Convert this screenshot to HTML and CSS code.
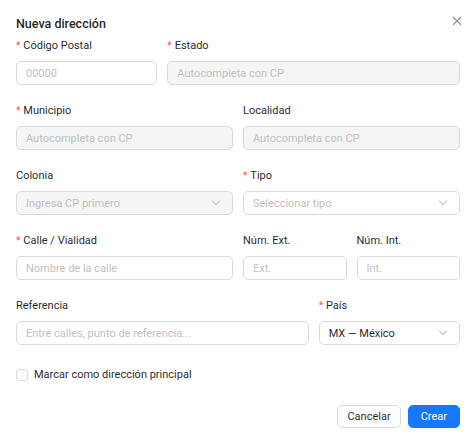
FILE: index.html
```html
<!DOCTYPE html>
<html lang="es">
<head>
  <meta charset="UTF-8" />
  <meta name="viewport" content="width=device-width, initial-scale=1.0"/>
  <title>Nueva dirección</title>
  <link rel="stylesheet" href="styles.css">
</head>
<body>

  <!-- Address modal -->
  <div class="modal">
    <div class="modal-header">
      <h2 class="modal-title">Nueva dirección</h2>
      <button class="modal-close" type="button" aria-label="Cerrar">
        <svg width="10" height="10" viewBox="0 0 10 10">
          <path d="M1 1 L9 9 M9 1 L1 9" stroke="currentColor" stroke-width="1.1" fill="none"/>
        </svg>
      </button>
    </div>

    <form class="form-grid">
      <div class="field span-8">
        <label class="required">Código Postal</label>
        <input class="input" type="text" placeholder="00000" />
      </div>
      <div class="field span-16">
        <label class="required">Estado</label>
        <input class="input" type="text" placeholder="Autocompleta con CP" disabled />
      </div>

      <div class="field span-12">
        <label class="required">Municipio</label>
        <input class="input" type="text" placeholder="Autocompleta con CP" disabled />
      </div>
      <div class="field span-12">
        <label>Localidad</label>
        <input class="input" type="text" placeholder="Autocompleta con CP" disabled />
      </div>

      <div class="field span-12">
        <label>Colonia</label>
        <div class="select is-disabled">
          <span class="select-placeholder">Ingresa CP primero</span>
          <span class="select-arrow"></span>
        </div>
      </div>
      <div class="field span-12">
        <label class="required">Tipo</label>
        <div class="select">
          <span class="select-placeholder">Seleccionar tipo</span>
          <span class="select-arrow"></span>
        </div>
      </div>

      <div class="field span-12">
        <label class="required">Calle / Vialidad</label>
        <input class="input" type="text" placeholder="Nombre de la calle" />
      </div>
      <div class="field span-6">
        <label>Núm. Ext.</label>
        <input class="input" type="text" placeholder="Ext." />
      </div>
      <div class="field span-6">
        <label>Núm. Int.</label>
        <input class="input" type="text" placeholder="Int." />
      </div>

      <div class="field span-16">
        <label>Referencia</label>
        <input class="input" type="text" placeholder="Entre calles, punto de referencia..." />
      </div>
      <div class="field span-8">
        <label class="required">País</label>
        <div class="select">
          <span class="select-value">MX — México</span>
          <span class="select-arrow"></span>
        </div>
      </div>
    </form>

    <label class="checkbox">
      <span class="checkbox-box"></span>
      Marcar como dirección principal
    </label>

    <div class="modal-footer">
      <button class="btn" type="button">Cancelar</button>
      <button class="btn btn-primary" type="button">Crear</button>
    </div>
  </div>

</body>
</html>
```

FILE: styles.css
```css
/* Reset and base styling */
* {
  margin: 0;
  padding: 0;
  box-sizing: border-box;
  font-family: 'Segoe UI', Roboto, sans-serif;
}

body {
  background: #fff;
  color: rgba(0, 0, 0, 0.88);
  font-size: 11px;
}

/* Modal */
.modal {
  width: 473px;
  padding: 14px 13px 14px 16px;
}

.modal-header {
  display: flex;
  justify-content: space-between;
  align-items: center;
  height: 20px;
  margin-bottom: 2px;
}

.modal-title {
  font-size: 12.5px;
  font-weight: 500;
  line-height: 20px;
}

.modal-close {
  border: none;
  background: none;
  color: rgba(0, 0, 0, 0.45);
  width: 18px;
  height: 18px;
  display: flex;
  align-items: center;
  justify-content: center;
  margin-top: -7px;
  margin-right: -6px;
  cursor: pointer;
}

/* Form grid: 24 columns */
.form-grid {
  display: grid;
  grid-template-columns: repeat(24, 1fr);
  column-gap: 10px;
  width: 444px;
}

.span-6 { grid-column: span 6; }
.span-8 { grid-column: span 8; }
.span-12 { grid-column: span 12; }
.span-16 { grid-column: span 16; }

.field {
  display: flex;
  flex-direction: column;
  margin-bottom: 16px;
}

.field label {
  line-height: 20px;
  margin-bottom: 5px;
}

.field label.required::before {
  content: '*';
  color: #ff4d4f;
  font-size: 10px;
  margin-right: 3px;
}

/* Inputs */
.input {
  height: 24px;
  border: 1px solid #d9d9d9;
  border-radius: 5px;
  padding: 0 9px;
  font-size: 11px;
  color: rgba(0, 0, 0, 0.88);
  background: #fff;
  outline: none;
}

.input::placeholder {
  color: #bfbfbf;
}

.input:disabled {
  background: #f5f5f5;
}

/* Select */
.select {
  height: 24px;
  border: 1px solid #d9d9d9;
  border-radius: 5px;
  padding: 0 9px;
  display: flex;
  align-items: center;
  justify-content: space-between;
  font-size: 11px;
  background: #fff;
}

.select.is-disabled {
  background: #f5f5f5;
}

.select-placeholder {
  color: #bfbfbf;
}

.select-arrow {
  width: 6px;
  height: 6px;
  border-right: 1px solid #bfbfbf;
  border-bottom: 1px solid #bfbfbf;
  transform: rotate(45deg);
  margin: -4px 4px 0 0;
}

/* Checkbox */
.checkbox {
  display: flex;
  align-items: center;
  gap: 6px;
  margin-top: 4px;
  line-height: 20px;
}

.checkbox-box {
  width: 12px;
  height: 12px;
  border: 1px solid #d9d9d9;
  border-radius: 3px;
}

/* Footer buttons */
.modal-footer {
  display: flex;
  justify-content: flex-end;
  gap: 7px;
  margin-top: 20px;
  width: 444px;
}

.btn {
  height: 23px;
  padding: 0 9px;
  border: 1px solid #d9d9d9;
  border-radius: 5px;
  background: #fff;
  font-size: 11px;
  color: rgba(0, 0, 0, 0.88);
  cursor: pointer;
}

.btn-primary {
  padding: 0 12px;
  background: #1677ff;
  border-color: #1677ff;
  color: #fff;
}
```
